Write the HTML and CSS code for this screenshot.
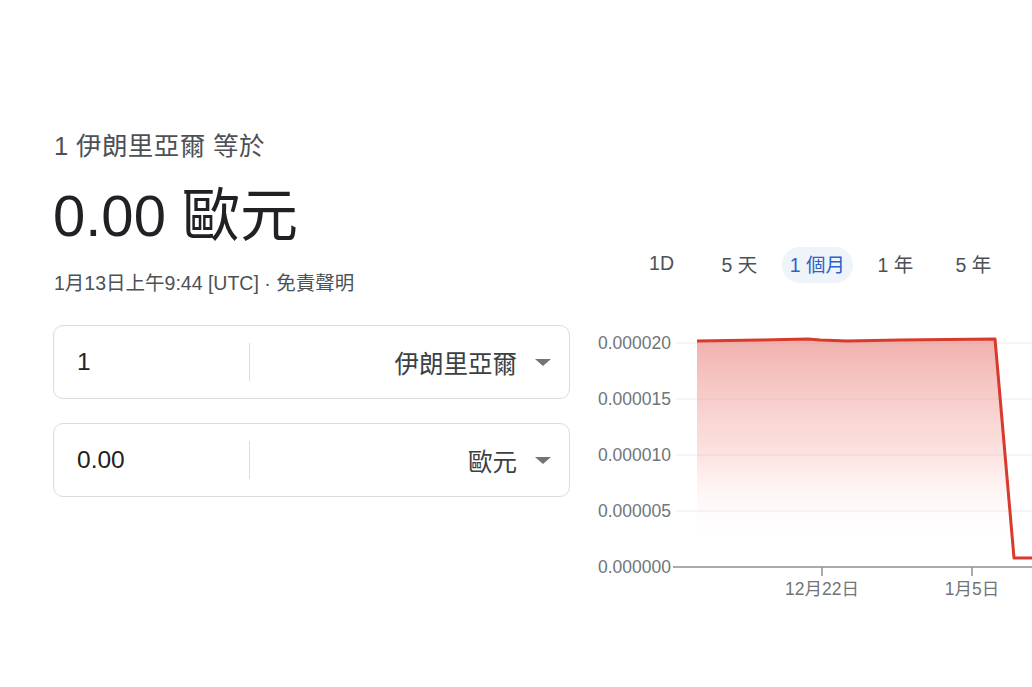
FILE: index.html
```html
<!DOCTYPE html>
<html lang="zh-Hant">
<head>
<meta charset="utf-8">
<title>匯率換算</title>
<link rel="stylesheet" href="styles.css">
</head>
<body>
<div class="page">
  <section class="left">
    <div class="heading">1 伊朗里亞爾 等於</div>
    <div class="result">0.00 歐元</div>
    <div class="stamp">1月13日上午9:44 [UTC] · 免責聲明</div>
    <div class="box">
      <div class="amount">1</div>
      <div class="divider"></div>
      <div class="unit"><span>伊朗里亞爾</span><span class="arrow"></span></div>
    </div>
    <div class="box">
      <div class="amount">0.00</div>
      <div class="divider"></div>
      <div class="unit"><span>歐元</span><span class="arrow"></span></div>
    </div>
  </section>
  <section class="right">
    <div class="tabs">
      <div class="tab">1D</div>
      <div class="tab">5 天</div>
      <div class="tab active">1 個月</div>
      <div class="tab">1 年</div>
      <div class="tab">5 年</div>
      <div class="tab">最長</div>
    </div>
    <svg class="chart" width="442" height="290" viewBox="0 0 442 290" xmlns="http://www.w3.org/2000/svg">
      <defs>
        <linearGradient id="g" gradientUnits="userSpaceOnUse" x1="0" y1="20" x2="0" y2="225">
          <stop offset="0" stop-color="#e8827a" stop-opacity="0.62"/>
          <stop offset="0.55" stop-color="#f3aaa4" stop-opacity="0.35"/>
          <stop offset="1" stop-color="#ffffff" stop-opacity="0"/>
        </linearGradient>
      </defs>
      <g class="grid">
        <line x1="86" y1="23" x2="442" y2="23"/>
        <line x1="86" y1="79" x2="442" y2="79"/>
        <line x1="86" y1="135" x2="442" y2="135"/>
        <line x1="86" y1="191" x2="442" y2="191"/>
      </g>
      <polygon points="107,21 170,20 218,19 230,20 257,21 310,20 405,19 424,238 442,238 442,247 107,247" fill="url(#g)"/>
      <g class="ylab">
        <text x="81" y="29">0.000020</text>
        <text x="81" y="85">0.000015</text>
        <text x="81" y="141">0.000010</text>
        <text x="81" y="197">0.000005</text>
        <text x="81" y="253">0.000000</text>
      </g>
      <line class="axis" x1="83" y1="247" x2="442" y2="247"/>
      <line class="axis" x1="232" y1="247" x2="232" y2="256"/>
      <line class="axis" x1="382" y1="247" x2="382" y2="256"/>
      <g class="xlab">
        <text x="232" y="275">12月22日</text>
        <text x="382" y="275">1月5日</text>
      </g>
      <polyline class="line" points="107,21 170,20 218,19 230,20 257,21 310,20 405,19 424,238 442,238"/>
    </svg>
  </section>
</div>
</body>
</html>
```

FILE: styles.css
```css
html, body {
  margin: 0;
  padding: 0;
  background: #ffffff;
  overflow: hidden;
}

body {
  font-family: "Liberation Sans", "Noto Sans CJK TC", sans-serif;
  color: #202124;
}

.page {
  display: flex;
  padding-top: 131px;
  width: 1032px;
  height: 687px;
  box-sizing: border-box;
}

.left {
  flex: none;
  width: 517px;
  margin-left: 53px;
}

.heading {
  font-size: 25.5px;
  line-height: 30px;
  letter-spacing: 0.4px;
  color: #4d5156;
  padding-left: 1px;
}

.result {
  margin-top: 19px;
  font-size: 58px;
  line-height: 72px;
  color: #202124;
}

.stamp {
  margin-top: 19px;
  font-size: 19.5px;
  line-height: 24px;
  color: #4d5156;
  padding-left: 1px;
}

.box {
  display: flex;
  align-items: center;
  height: 74px;
  box-sizing: border-box;
  border: 1px solid #dadce0;
  border-radius: 10px;
  margin-top: 24px;
  font-size: 24.5px;
  color: #202124;
}

.stamp + .box {
  margin-top: 30px;
}

.amount {
  flex: none;
  width: 172px;
  padding-left: 23px;
}

.divider {
  flex: none;
  width: 1px;
  height: 38px;
  background: #dadce0;
}

.unit {
  flex: 1;
  display: flex;
  justify-content: flex-end;
  align-items: center;
  padding-right: 18px;
  color: #3c4043;
}

.arrow {
  width: 0;
  height: 0;
  margin-left: 18px;
  border-left: 8px solid transparent;
  border-right: 8px solid transparent;
  border-top: 7px solid #70757a;
}

.right {
  flex: none;
  width: 442px;
  margin-left: 20px;
  overflow: hidden;
  padding-top: 116px;
}

.tabs {
  display: flex;
  gap: 7px;
  padding-left: 36px;
  height: 36px;
}

.tab {
  flex: none;
  width: 71px;
  height: 36px;
  box-sizing: border-box;
  padding-bottom: 3px;
  border-radius: 18px;
  display: flex;
  align-items: center;
  justify-content: center;
  font-size: 19.5px;
  color: #4d5156;
  white-space: nowrap;
}

.tab.active {
  background: #eff3fa;
  color: #2b63c8;
}

.chart {
  display: block;
  margin-top: 37px;
}

.grid line {
  stroke: #ececec;
  stroke-width: 1;
}

.ylab text {
  font-family: "Liberation Sans", sans-serif;
  font-size: 17.5px;
  fill: #70757a;
  text-anchor: end;
}

.xlab text {
  font-family: "Liberation Sans", "Noto Sans CJK TC", sans-serif;
  font-size: 17.5px;
  fill: #70757a;
  text-anchor: middle;
}

.axis {
  stroke: #8a8f94;
  stroke-width: 1.5;
}

.line {
  fill: none;
  stroke: #d93a2e;
  stroke-width: 3;
  stroke-linejoin: round;
}
```
